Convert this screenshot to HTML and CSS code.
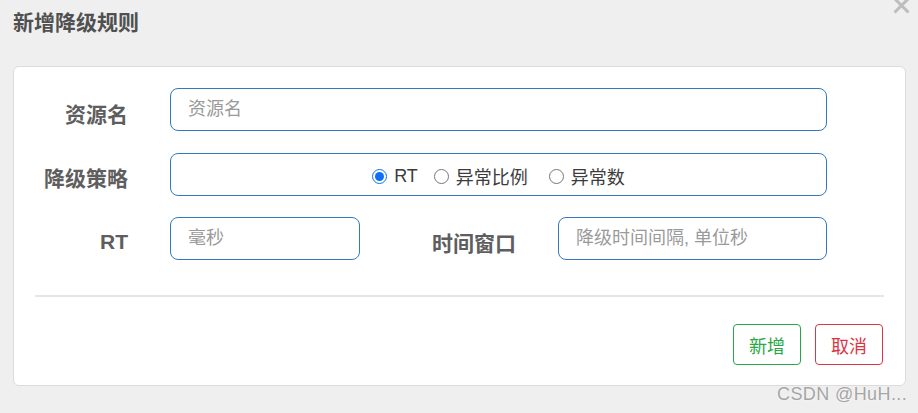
FILE: index.html
```html
<!DOCTYPE html>
<html lang="zh">
<head>
<meta charset="utf-8">
<link rel="stylesheet" href="styles.css">
</head>
<body>
<div class="page">
  <header class="modal-header">
    <h1 class="title">新增降级规则</h1>
    <button class="close" type="button" aria-label="close">
      <svg width="17" height="17" viewBox="0 0 17 17"><path d="M1.5 1.5 L15.5 15.5 M15.5 1.5 L1.5 15.5" stroke="#bdbdbd" stroke-width="3" fill="none"/></svg>
    </button>
  </header>
  <div class="card">
    <div class="form">
      <div class="row row-wide">
        <label class="label">资源名</label>
        <input class="input" type="text" placeholder="资源名">
      </div>
      <div class="row row-wide">
        <label class="label">降级策略</label>
        <div class="input radio-box">
          <label class="radio-item"><input type="radio" name="s" checked><span>RT</span></label>
          <label class="radio-item r2"><input type="radio" name="s"><span>异常比例</span></label>
          <label class="radio-item"><input type="radio" name="s"><span>异常数</span></label>
        </div>
      </div>
      <div class="row row-split">
        <label class="label">RT</label>
        <input class="input" type="text" placeholder="毫秒">
        <label class="label">时间窗口</label>
        <input class="input" type="text" placeholder="降级时间间隔, 单位秒">
      </div>
    </div>
    <hr class="divider">
    <div class="actions">
      <button class="btn btn-green" type="button">新增</button>
      <button class="btn btn-red" type="button">取消</button>
    </div>
  </div>
</div>
<div class="watermark">CSDN @HuH...</div>
</body>
</html>
```

FILE: styles.css
```css
html, body {
  margin: 0;
  padding: 0;
  background: #efefef;
  font-family: "Liberation Sans", "Noto Sans CJK SC", sans-serif;
  width: 918px;
  height: 413px;
  overflow: hidden;
}

.page {
  padding: 0 12px 0 13px;
}

.modal-header {
  position: relative;
  padding-top: 10px;
  height: 24px;
  margin-bottom: 32px;
}

.title {
  margin: 0;
  font-size: 21px;
  line-height: 25px;
  font-weight: bold;
  color: #505050;
}

.close {
  position: absolute;
  top: -3px;
  right: -4px;
  border: none;
  background: none;
  padding: 0;
  width: 17px;
  height: 17px;
  display: block;
}

.close svg {
  display: block;
}

.card {
  background: #fff;
  border: 1px solid #dcdcdc;
  border-radius: 6px;
  padding: 21px 21px 20px 21px;
}

.form {
  display: flex;
  flex-direction: column;
  gap: 21.5px;
}

.row {
  display: grid;
  column-gap: 42px;
  align-items: center;
  height: 43px;
}

.row-wide {
  grid-template-columns: 93px 657px;
}

.row-split {
  grid-template-columns: 93px 190px 114px 269px;
}

.label {
  text-align: right;
  font-size: 21px;
  font-weight: bold;
  color: #5e5e5e;
  padding-top: 6px;
  white-space: nowrap;
}

.input {
  box-sizing: border-box;
  height: 43px;
  border: 1px solid #3479bd;
  border-radius: 8px;
  padding: 0 17px;
  font-family: "Liberation Sans", "Noto Sans CJK SC", sans-serif;
  font-size: 18px;
  color: #333;
  background: #fff;
  outline: none;
  width: 100%;
}

.input::placeholder {
  color: #9a9a9a;
}

.radio-box {
  display: flex;
  align-items: center;
  justify-content: center;
  padding-left: 0;
  padding-right: 0;
  gap: 16px;
  padding-top: 4px;
}

.radio-item {
  display: inline-flex;
  align-items: center;
  gap: 7px;
  font-size: 18px;
  color: #3c3c3c;
}

.radio-item.r2 {
  margin-right: 5px;
}

.radio-item input {
  margin: 0;
  width: 15px;
  height: 15px;
  accent-color: #0d6efd;
}

.divider {
  border: none;
  height: 2px;
  background: #e6e6e6;
  margin: 35px 0 0 0;
}

.actions {
  display: flex;
  justify-content: flex-end;
  gap: 14px;
  margin-top: 27px;
  margin-right: 1px;
}

.btn {
  height: 41px;
  padding: 0 15px;
  background: #fff;
  border-radius: 4px;
  font-family: "Liberation Sans", "Noto Sans CJK SC", sans-serif;
  font-size: 18px;
}

.btn-green {
  border: 1px solid #28a745;
  color: #28a745;
}

.btn-red {
  border: 1px solid #dc3545;
  color: #dc3545;
}

.watermark {
  position: absolute;
  left: 777px;
  top: 384px;
  font-family: "Liberation Sans", sans-serif;
  font-size: 18px;
  color: #a5a5a5;
  text-shadow: 0 0 2px #fff;
  letter-spacing: 0.4px;
}
```
